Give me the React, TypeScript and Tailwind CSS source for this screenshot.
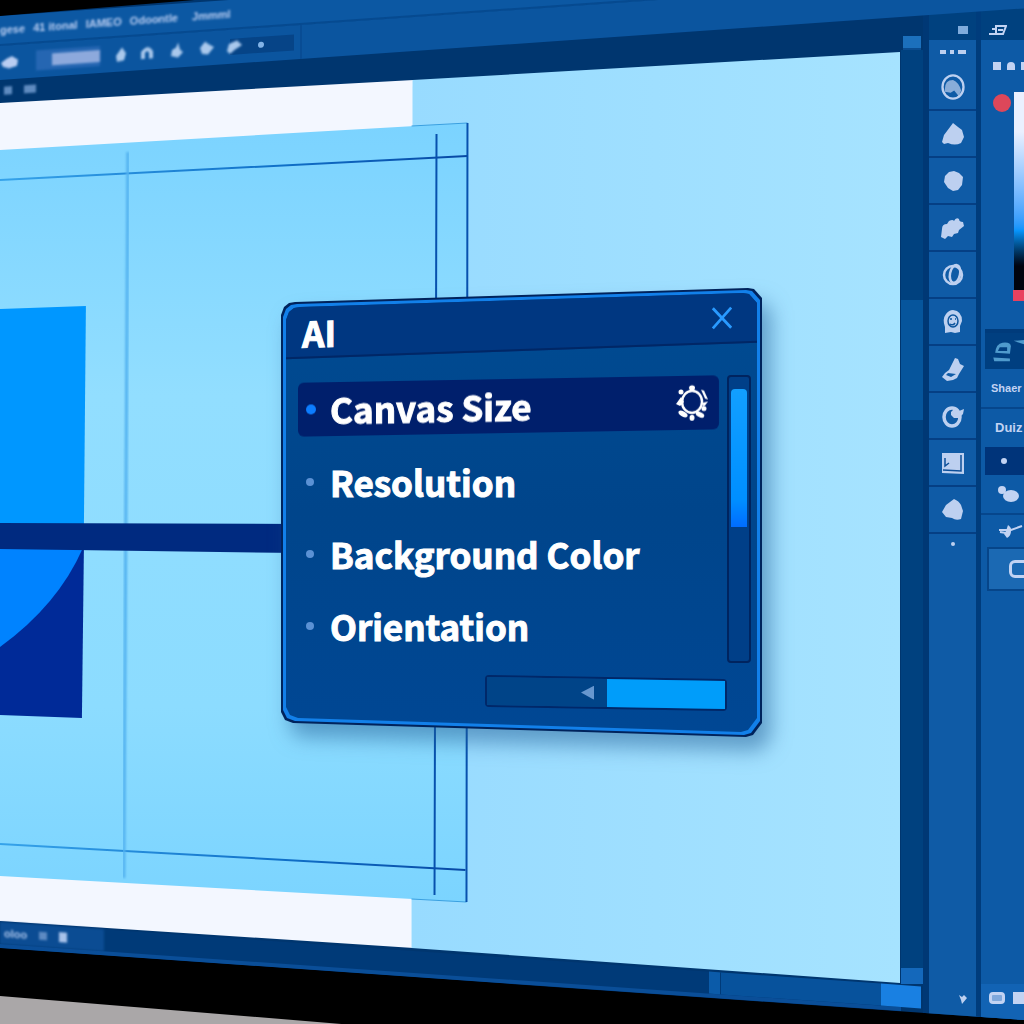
import React, { useState } from "react";
import { clsx } from "clsx";

const MENUS = ["gese", "41 itonal", "IAMEO", "Odoontle", "Jmmml"];

const OPTIONS = ["Canvas Size", "Resolution", "Background Color", "Orientation"];

const TOOLS = [
  { label: "Lasso", art: <LassoArt /> },
  { label: "Pen", art: <path d="M12 1 3 13l-2 7 2 2 4-1q7 3 13 0l3-6-2-7-4-3z" /> },
  { label: "Brush", art: <path d="m13 2 5 2 4 4-1 8-4 5-5 1-5-3-4-6 1-6 4-4z" /> },
  { label: "Smudge", art: <path d="M1 13q0-5 5-5l2-3q4-2 5 0 2-4 5-2 0 3 4 3l1 4-5 4-1 3-4 1-2 3-4-1-3 3-4-2z" /> },
  { label: "Dodge", art: <RingArt /> },
  { label: "Stamp", art: <StampArt /> },
  {
    label: "Eraser",
    art: <path d="m14 1 3 1 2 5 4 2-5 8-2 4-4 2-6 1-5-4 3-4 4-3zM5 18l5 2 5-3-8-1z" fillRule="evenodd" />,
  },
  { label: "Rotate", art: <RotateArt /> },
  { label: "Crop", art: <CropArt /> },
  { label: "Bucket", art: <path d="M13 1q5 2 7 6l2 6-2 8q-5 2-9-1l-6-1-4-5 4-7z" /> },
];

const PANEL_CLIP =
  "[clip-path:polygon(0_27px,3px_19px,8px_15px,14px_14px,calc(100%-14px)_0,calc(100%-8px)_1px,100%_10px,100%_calc(100%-14px),calc(100%-9px)_calc(100%-2px),calc(100%-16px)_100%,12px_calc(100%-14px),4px_calc(100%-17px),0_calc(100%-25px))]";

function LassoArt() {
  return (
    <>
      <ellipse cx="12" cy="12" rx="9" ry="10" fill="none" stroke="currentColor" strokeWidth="2" />
      <path d="M5 14q0-8 7-8 5 2 7 9l-2 5-4-5-3 2-5-1z" opacity=".7" />
    </>
  );
}

function RingArt() {
  return (
    <g fill="none" stroke="currentColor" strokeWidth="2.5">
      <ellipse cx="12" cy="12" rx="9" ry="9" />
      <ellipse cx="14" cy="11" rx="5" ry="9" transform="rotate(12 14 11)" />
    </g>
  );
}

function StampArt() {
  return (
    <>
      <path d="M12 0q9 1 9 11l-2 5v6l-5 1-4-1-6 1v-6q-3-8 1-13 3-4 7-4z" />
      <g fill="none" stroke="#0d559e" strokeWidth="1.5">
        <ellipse cx="12" cy="11" rx="5" ry="6" />
        <path d="M9 9h2m3 0h1m-6 5q3 2 5-1" />
      </g>
    </>
  );
}

function RotateArt() {
  return (
    <>
      <ellipse cx="11" cy="13" rx="8" ry="9" fill="none" stroke="currentColor" strokeWidth="3.5" />
      <path d="m10 8 4-4 4 3 5-2-1 5-4 4-5 0-3-3z" />
    </>
  );
}

function CropArt() {
  return (
    <>
      <path d="M1 2h22v21L1 22z" />
      <path d="M4 7v8l4-3m-6 7 18 1V4" fill="none" stroke="#0d4f98" strokeWidth="1.5" />
    </>
  );
}

function GearIcon() {
  return (
    <svg viewBox="0 0 34 36" className="h-9 w-[34px] shrink-0" aria-hidden="true">
      <ellipse cx="17" cy="17" rx="10" ry="11" fill="none" stroke="#fff" strokeWidth="2.5" />
      <g fill="#fff">
        <ellipse cx="17" cy="3" rx="3" ry="2.5" />
        <circle cx="6" cy="7" r="2.5" />
        <path d="m26 5 3 1 4 9-3-1zM1 19l5-7 3 5-4 4zM28 18l5-1-3 4-2 1z" />
        <circle cx="29" cy="24" r="2.5" />
        <ellipse cx="25" cy="30" rx="4.5" ry="2.5" transform="rotate(25 25 30)" />
        <ellipse cx="17" cy="33" rx="2.5" ry="3" />
        <ellipse cx="8" cy="29" rx="5" ry="2.5" transform="rotate(30 8 29)" />
      </g>
    </svg>
  );
}

// The open document: white paper, artboard, guides and the logo shapes
function Artwork() {
  return (
    <svg
      viewBox="0 0 902 1024"
      preserveAspectRatio="none"
      className="col-start-1 row-start-1 h-full w-full"
      aria-hidden="true"
    >
      <defs>
        <linearGradient id="paper" x1="0" y1="0" x2="1" y2="0">
          <stop offset="0" stopColor="#98dbff" />
          <stop offset="1" stopColor="#a6e3ff" />
        </linearGradient>
        <linearGradient id="board" x1="0" y1="0" x2="0" y2="1">
          <stop offset="0" stopColor="#7bd3ff" />
          <stop offset=".35" stopColor="#92deff" />
          <stop offset=".75" stopColor="#8cdcff" />
          <stop offset="1" stopColor="#7bd4ff" />
        </linearGradient>
        <linearGradient id="guide" gradientUnits="userSpaceOnUse" x1="0" y1="0" x2="468" y2="0">
          <stop offset="0" stopColor="#36a3ea" />
          <stop offset=".6" stopColor="#1070c8" />
          <stop offset="1" stopColor="#0748a4" />
        </linearGradient>
        <filter id="soft">
          <feGaussianBlur stdDeviation="1" />
        </filter>
      </defs>
      <path d="M0 103 414 80v868L0 921z" fill="#f3f7ff" />
      <path d="M413 80 901 52v931l-489-35z" fill="url(#paper)" />
      <path d="m0 150 468-27-1 779L0 876z" fill="url(#board)" />
      <path d="m412 126 56-3M412 899l55 3" stroke="#3aa0e0" strokeWidth="1" />
      <path d="m0 180 468-24M0 844l125 7 341 19" fill="none" stroke="url(#guide)" strokeWidth="2" />
      <path d="M128 152 124 878" stroke="#52b2f0" strokeWidth="3" filter="url(#soft)" />
      <path d="M437 134 435 895M468 123l-1 779" stroke="#0751ae" strokeWidth="2" />
      <path d="m0 309 86-3-2 220H0z" fill="#0097ff" />
      <path d="M0 548h84l-2 170-82-3z" fill="#002a98" />
      <path d="M0 548h83Q58 605 0 647z" fill="#0083ff" />
      <path d="m0 523 300 1v29L0 549z" fill="#002a80" />
    </svg>
  );
}

function TopBars() {
  return (
    <header className="z-20 col-start-1 row-start-1 origin-left -skew-y-[4deg] self-start text-[#b9cdf2]">
      <div className="h-4" />
      <nav className="flex h-[30px] items-center gap-2 border-b-2 border-[#064a90] bg-[#0c58a3]">
        {MENUS.map((menu, i) => (
          <button
            key={menu}
            className={clsx("text-[11px] leading-4 font-bold blur-[1px]", i === 4 && "ml-1.5")}
          >
            {menu}
          </button>
        ))}
      </nav>
      <div className="flex h-[34px] items-center gap-4 bg-[#0b559f]">
        <div className="flex items-center gap-4 blur-[1px]">
          <svg viewBox="0 0 20 14" className="h-3.5 w-5" fill="currentColor" aria-hidden="true">
            <path d="m1 7 6-4 5-2 6 4-1 6-8 2-6-2z" />
          </svg>
          <div className="flex h-5 w-16 items-center justify-end bg-[#2566b2]">
            <div className="h-3 w-12 bg-[#8da9dc]" />
          </div>
        </div>
        <div className="flex items-center">
          <svg viewBox="0 0 130 18" className="z-10 h-[18px] w-[130px] blur-[1px]" fill="#a9c8ec" aria-hidden="true">
            <path d="m6 2 4 6-2 7-7 1-1-6z" />
            <path d="M25 15V8q7-9 12 0v7h-4V9q-2-3-4 0v6z" />
            <path d="m62 1 2 7 3 3-5 5-7-2 1-6 4-2z" />
            <path d="m89 2 4 3 5 3-6 7-6-1-2-6z" />
            <path d="m113 6 8-3 5 5-7 4-5 4-3-3z" />
          </svg>
          <div className="-ml-4 flex h-4 w-16 items-center bg-[#064487]">
            <span className="ml-7 size-1.5 rounded-full bg-[#82b3e6]" />
          </div>
          <div className="ml-1.5 h-[34px] w-0.5 bg-[#084c94]" />
        </div>
      </div>
      <div className="flex h-[22px] items-center gap-3 pl-1 text-[#5f8bc0] blur-[1px]">
        <span className="size-2 bg-current" />
        <span className="h-2 w-3 bg-current" />
      </div>
    </header>
  );
}

function StatusBar() {
  return (
    <footer className="col-start-1 row-start-1 mb-[76px] flex h-[26px] origin-left skew-y-[4deg] items-stretch self-end border-b-4 border-[#0a4e98] bg-[#003a78] text-[#a9c3ea]">
      <div className="flex w-[104px] items-center gap-3 bg-[#0b4c93] pl-1 blur-[1px]">
        <span className="text-[11px] font-bold">oloo</span>
        <span className="size-2 bg-[#5d8ac2]" />
        <span className="h-2.5 w-2 bg-current" />
      </div>
      <div className="flex-1" />
      <div className="w-3 border-r border-[#003a78] bg-[#0b5ba9]" />
      <div className="w-40 bg-[#07529c]" />
      <div className="-mr-5 w-10 bg-[#1980e2]" />
    </footer>
  );
}

function ScrollStrip() {
  return (
    <div className="flex w-7 flex-col border-r-[6px] border-[#003875] pt-9 pb-10">
      <div className="mx-0.5 h-3.5 border-b-2 border-[#0a4c90] bg-[#1c70bc]" />
      <div className="h-[250px] bg-[#00417f]" />
      <div className="h-[120px] bg-[#06559c]" />
      <div className="flex-1 bg-[#00417f]" />
      <div className="h-4 bg-[#1468bb]" />
    </div>
  );
}

function ToolStrip() {
  return (
    <aside className="z-10 flex w-[52px] flex-col border-r-[5px] border-[#003c7c] bg-[#0f5ba6] text-[#bdd0f0]">
      <div className="flex h-10 items-end justify-end bg-[#00417f] pr-2 pb-1.5">
        <span className="h-2 w-2.5 bg-[#7fabdc]" />
      </div>
      <div className="flex h-6 items-center justify-center gap-1">
        <span className="h-1 w-1.5 bg-current" />
        <span className="size-1 bg-current" />
        <span className="h-1 w-2 bg-current" />
      </div>
      {TOOLS.map((tool, i) => (
        <button
          key={tool.label}
          aria-label={tool.label}
          className="flex h-[47px] items-center justify-center border-b-2 border-[#053f84]"
        >
          <svg viewBox="0 0 24 24" className={clsx(i === 0 ? "size-7" : "size-6")} fill="currentColor">
            {tool.art}
          </svg>
        </button>
      ))}
      <span className="mx-auto mt-2 size-1 rounded-full bg-current" />
      <div className="flex-1" />
      <svg viewBox="0 0 10 10" className="mb-5 ml-auto mr-2 size-2.5" fill="currentColor" aria-hidden="true">
        <path d="m1 1 3 2 2-2 3 3-5 6-1-4z" />
      </svg>
    </aside>
  );
}

function ColorPanel() {
  return (
    <aside className="z-10 flex w-[43px] flex-col overflow-hidden bg-[#0d5aa6] text-[#c2d3f3]">
      <div className="flex h-10 items-end bg-[#00417f] pb-1 pl-2">
        <svg viewBox="0 0 18 12" className="h-3 w-[18px]" aria-hidden="true">
          <path d="M0 10h7M3 5h4M7 2h10l-3 8H7z" fill="none" stroke="currentColor" strokeWidth="2" />
          <path d="M9 5h5v2H9z" fill="currentColor" />
        </svg>
      </div>
      <div className="flex h-[52px] items-center gap-1.5 pl-3">
        <span className="size-2 shrink-0 bg-current" />
        <span className="size-2 shrink-0 rounded-t bg-current" />
        <span className="size-2 shrink-0 bg-current" />
      </div>
      <div className="flex h-[198px] justify-between pl-3">
        <span className="mt-0.5 size-[18px] rounded-full bg-[#dd475a]" />
        <span className="w-2.5 bg-linear-to-b from-[#eaf0ff] from-20% via-[#0794fb] via-70% to-[#00040f] to-88%" />
      </div>
      <div className="ml-8 h-[11px] bg-[#e9415f]" />
      <div className="mt-7 ml-1 flex h-10 items-center border-t-4 border-[#003b7b] bg-[#003f80] pl-2 text-[#4f9bcd]">
        <svg viewBox="0 0 34 26" className="h-6 w-8 shrink-0" fill="currentColor" aria-hidden="true">
          <path d="M2 15q1-10 8-11 9-1 9 4l-1 8z" />
          <path d="M7 9h8v4H5z" fill="#003f80" />
          <path d="m22 2 12-1v5zM0 20l18 1v3H1z" />
        </svg>
      </div>
      <button className="h-10 border-b-2 border-[#06468c] pl-2.5 text-left text-[11px] leading-4 font-bold">Shaer</button>
      <button className="h-[38px] pl-3.5 text-left text-[13px] leading-4 font-bold">Duiz</button>
      <div className="ml-1 flex h-7 items-center bg-[#00347a] pl-4">
        <span className="size-1.5 rounded-full bg-current" />
      </div>
      <div className="flex h-10 items-center border-b-2 border-[#06468c] pl-4">
        <svg viewBox="0 0 22 18" className="h-[18px] w-[22px]" fill="currentColor" aria-hidden="true">
          <circle cx="5" cy="5" r="4" />
          <ellipse cx="14" cy="11" rx="8" ry="6" />
        </svg>
      </div>
      <div className="flex h-8 items-center pl-4">
        <svg viewBox="0 0 26 14" className="h-3.5 w-[26px]" aria-hidden="true">
          <path d="M11 1q4 3 3 6 0 5-4 7l-3-4 2-3z" fill="currentColor" />
          <path d="M2 6h12l11-4M3 8l6 1" fill="none" stroke="currentColor" strokeWidth="2" />
        </svg>
      </div>
      <button
        aria-label="Frame"
        className="ml-1.5 flex h-11 items-center border-2 border-r-0 border-[#064589] bg-[#1b69b3] pl-5"
      >
        <span className="h-[18px] w-6 shrink-0 rounded-md border-[3px] border-current" />
      </button>
      <div className="flex-1" />
      <div className="flex h-10 items-start gap-2 bg-[#1263b4] pt-2 pl-2">
        <span className="h-3 w-4 shrink-0 rounded border-[3px] border-current bg-[#7fa8dc]" />
        <span className="size-3 shrink-0 bg-current" />
      </div>
    </aside>
  );
}

function AiDialog() {
  const [selected, setSelected] = useState(OPTIONS[0]);

  return (
    <section
      role="dialog"
      aria-labelledby="dialog-title"
      className="absolute top-72 left-[281px] z-30 w-[481px] font-['Noto_Sans_CJK_SC','Noto_Sans',sans-serif] [-webkit-text-stroke:1px_white] drop-shadow-[9px_14px_10px_rgba(30,90,145,0.5)]"
    >
      <div className={clsx("bg-[#00235c] p-0.5", PANEL_CLIP)}>
        <div className={clsx("bg-[#1280ea] p-[3px]", PANEL_CLIP)}>
          <div
            className={clsx(
              "flex h-[439px] flex-col bg-linear-to-b from-[#004b92] via-[#00458b] to-[#004794]",
              PANEL_CLIP
            )}
          >
            <div className="flex h-[58px] -skew-y-[2deg] items-center justify-between border-b-2 border-[#002766] bg-[#003781] pt-2 pr-6 pl-4">
              <h1 id="dialog-title" className="text-[35px] leading-10 font-bold text-white">
                AI
              </h1>
              <button aria-label="Close" className="text-[#299aff]">
                <svg viewBox="0 0 24 26" className="h-6 w-[22px]" fill="none" stroke="currentColor" strokeWidth="3">
                  <path d="m2 2 20 22M22 2 2 24" />
                </svg>
              </button>
            </div>

            <div className="flex gap-2 pt-6 pr-1.5 pl-3">
              <ul className="flex flex-1 flex-col gap-[18px] pt-1">
                {OPTIONS.map((option) => (
                  <li
                    key={option}
                    className={clsx("rounded-md first:mb-1 first:-skew-y-[1deg]", selected === option && "bg-[#001f6c]")}
                  >
                    <button
                      onClick={() => setSelected(option)}
                      className="flex h-[54px] w-full items-center gap-3.5 pr-2.5 pl-2 text-left text-[35px] leading-[54px] font-bold whitespace-nowrap text-white"
                    >
                      <span
                        className={clsx(
                          "shrink-0 rounded-full",
                          selected === option ? "size-2.5 bg-[#0c7dff]" : "mr-0.5 size-2 bg-[#5b91d4]"
                        )}
                      />
                      <span className="flex-1">{option}</span>
                      {selected === option && <GearIcon />}
                    </button>
                  </li>
                ))}
              </ul>
              <div className="h-[288px] w-6 rounded border-2 border-[#00245f] bg-[#003f88] px-0.5 pt-3">
                <div className="h-[138px] rounded-t bg-linear-to-b from-[#129fff] via-[#008fff] via-80% to-[#006cff]" />
              </div>
            </div>

            <div className="mt-3.5 mr-[30px] flex h-8 w-[242px] skew-y-[1deg] self-end rounded border-2 border-[#002869]">
              <button aria-label="Back" className="flex flex-1 items-center justify-end bg-[#004488] pr-3">
                <svg viewBox="0 0 14 14" className="size-3.5" fill="#6797cf">
                  <path d="M0 7 13 0v14z" />
                </svg>
              </button>
              <button aria-label="Apply" className="w-[118px] bg-[#009dfa]" />
            </div>
          </div>
        </div>
      </div>
    </section>
  );
}

export default function App() {
  return (
    <div className="relative grid min-h-screen w-full grid-cols-1 overflow-hidden bg-black font-['Liberation_Sans',sans-serif]">
      {/* Lit screen, seen at a slight angle inside its bezel */}
      <div className="col-start-1 row-start-1 grid grid-cols-1 [clip-path:polygon(0_16px,19%_0,100%_0,100%_calc(100%-4px),0_calc(100%-76px))]">
        <div className="col-start-1 row-start-1 flex bg-[#00366f]">
          <div className="grid flex-1 grid-cols-1 grid-rows-1">
            <Artwork />
            <StatusBar />
          </div>
          <ScrollStrip />
          <ToolStrip />
          <ColorPanel />
        </div>
        <TopBars />
      </div>

      <div className="col-start-1 row-start-1 h-7 w-1/3 self-end bg-[#aaa7a8] [clip-path:polygon(0_0,100%_100%,0_100%)]" />

      <AiDialog />
    </div>
  );
}
